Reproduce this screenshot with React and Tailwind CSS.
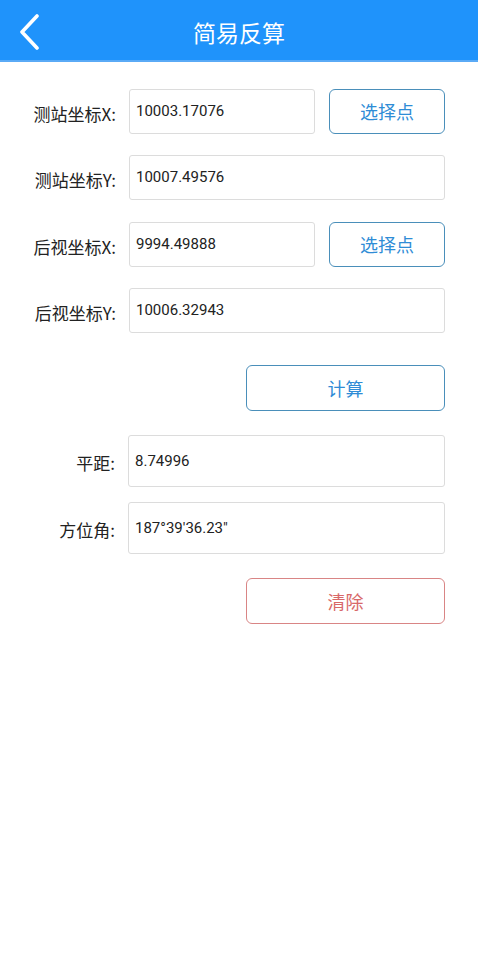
import React from "react";

const font = { fontFamily: '"Noto Sans CJK SC", Roboto, sans-serif' };

function Field({ label, value, tall, button }) {
  return (
    <div className="flex items-center">
      <div className="w-[116px] shrink-0 whitespace-nowrap pt-[4px] text-right text-[17px] text-[#222]">
        {label}
      </div>
      <div
        className={`ml-[13px] flex flex-1 items-center rounded-[3px] border border-[#dcdcdc] bg-white px-[6px] text-[15px] text-[#222] ${
          tall ? "h-[52px]" : "h-[45px]"
        }`}
        style={{ fontFamily: "Roboto, sans-serif" }}
      >
        {value}
      </div>
      {button && (
        <button className="ml-[14px] flex h-[45px] w-[116px] shrink-0 items-center justify-center rounded-[6px] border-[1.5px] border-[#4a8fba] text-[18px] text-[#2f8cd6]">
          {button}
        </button>
      )}
    </div>
  );
}

function ActionButton({ children, red }) {
  return (
    <div className="flex justify-end">
      <button
        className={`flex h-[46px] w-[199px] items-center justify-center rounded-[6px] border-[1.5px] text-[18px] ${
          red
            ? "border-[#d98585] text-[#d86868]"
            : "border-[#4a8fba] text-[#2f8cd6]"
        }`}
      >
        {children}
      </button>
    </div>
  );
}

export default function App() {
  return (
    <div className="min-h-[960px] w-[478px] bg-white" style={font}>
      <div className="relative flex h-[62px] items-center justify-center border-b-2 border-[#5aaaf6] bg-[#1f93fb] pt-[4px]">
        <svg
          className="absolute left-[18px] top-[14px]"
          width="24"
          height="36"
          viewBox="0 0 24 36"
          fill="none"
        >
          <path
            d="M19 2 L4 18 L19 34"
            stroke="white"
            strokeWidth="3.6"
            strokeLinecap="round"
            strokeLinejoin="round"
          />
        </svg>
        <span className="text-[23px] text-white">简易反算</span>
      </div>

      <div className="pr-[33px] pt-[27px]">
        <Field label="测站坐标X:" value="10003.17076" button="选择点" />
        <div className="h-[21px]" />
        <Field label="测站坐标Y:" value="10007.49576" />
        <div className="h-[22px]" />
        <Field label="后视坐标X:" value="9994.49888" button="选择点" />
        <div className="h-[21px]" />
        <Field label="后视坐标Y:" value="10006.32943" />
        <div className="h-[32px]" />
        <ActionButton>计算</ActionButton>
        <div className="h-[24px]" />
        <div className="-ml-px">
          <Field label="平距:" value="8.74996" tall />
          <div className="h-[15px]" />
          <Field label="方位角:" value={"187°39'36.23\""} tall />
        </div>
        <div className="h-[24px]" />
        <ActionButton red>清除</ActionButton>
      </div>
    </div>
  );
}
